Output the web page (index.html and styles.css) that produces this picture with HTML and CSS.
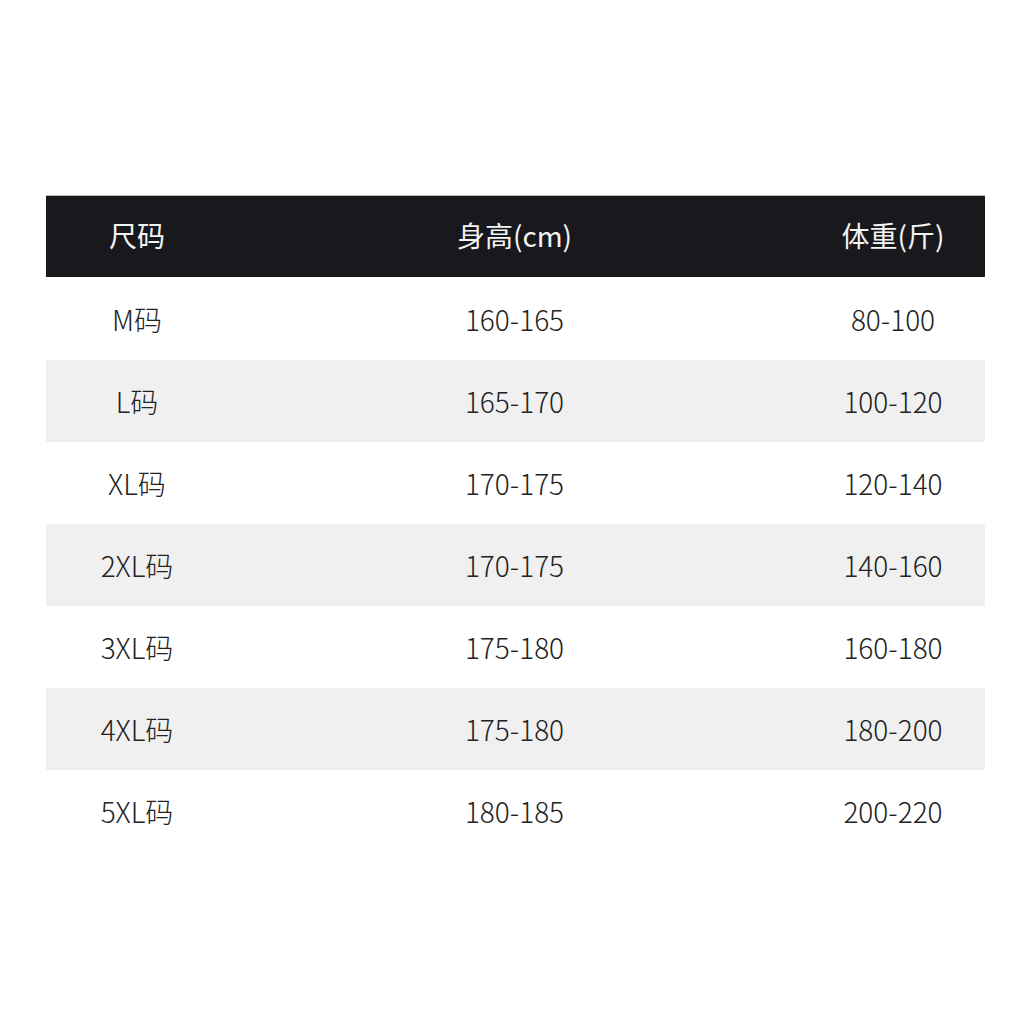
FILE: index.html
```html
<!DOCTYPE html>
<html lang="zh-CN">
<head>
<meta charset="utf-8">
<title>尺码表</title>
<link rel="stylesheet" href="styles.css">
</head>
<body>
<div class="table">
  <div class="row head">
    <div class="c1">尺码</div><div class="c2">身高(cm)</div><div class="c3">体重(斤)</div>
  </div>
  <div class="row">
    <div class="c1">M码</div><div class="c2">160-165</div><div class="c3">80-100</div>
  </div>
  <div class="row alt">
    <div class="c1">L码</div><div class="c2">165-170</div><div class="c3">100-120</div>
  </div>
  <div class="row">
    <div class="c1">XL码</div><div class="c2">170-175</div><div class="c3">120-140</div>
  </div>
  <div class="row alt">
    <div class="c1">2XL码</div><div class="c2">170-175</div><div class="c3">140-160</div>
  </div>
  <div class="row">
    <div class="c1">3XL码</div><div class="c2">175-180</div><div class="c3">160-180</div>
  </div>
  <div class="row alt">
    <div class="c1">4XL码</div><div class="c2">175-180</div><div class="c3">180-200</div>
  </div>
  <div class="row">
    <div class="c1">5XL码</div><div class="c2">180-185</div><div class="c3">200-220</div>
  </div>
</div>
</body>
</html>
```

FILE: styles.css
```css
html, body {
  margin: 0;
  padding: 0;
  background: #ffffff;
}
body {
  width: 1024px;
  height: 1024px;
  padding: 196px 39px 0 46px;
  box-sizing: border-box;
  font-family: "Noto Sans CJK SC", "Noto Sans", sans-serif;
  color: #222222;
}
.table {
  display: flex;
  flex-direction: column;
  width: 939px;
}
.row {
  display: grid;
  grid-template-columns: 182px 1fr 184px;
  height: 82px;
  align-items: center;
  font-size: 28px;
  font-weight: 300;
}
.row > div {
  text-align: center;
}
.head {
  height: 81px;
  padding-bottom: 4px;
  box-sizing: border-box;
  background: #18181d;
  color: #f4f4f4;
  font-weight: 400;
  box-shadow: 0 -1px 0 #b8b8b8;
  margin-bottom: 1px;
}
.alt {
  background: #f0f0f0;
}
```
